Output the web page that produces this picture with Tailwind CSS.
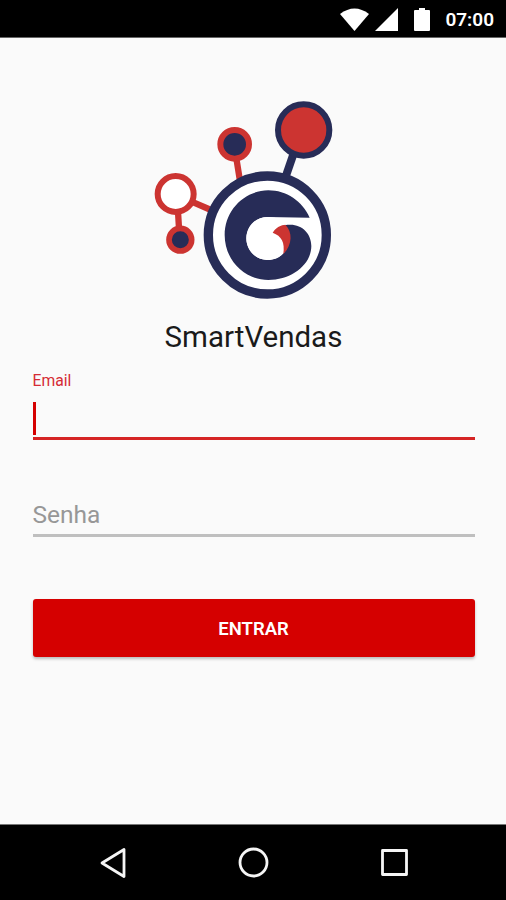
<!DOCTYPE html>
<html lang="pt-BR">
<head>
<meta charset="utf-8">
<meta name="viewport" content="width=device-width, initial-scale=1">
<title>SmartVendas</title>
<script src="https://cdn.jsdelivr.net/npm/@tailwindcss/browser@4"></script>
</head>
<body class="bg-[#fafafa] font-[Roboto,sans-serif]">
<div class="flex h-[900px] w-[506px] flex-col overflow-hidden">
  <header class="flex h-[38px] shrink-0 items-center justify-end border-b border-[#666] bg-black pt-[2px] pr-3 text-white">
    <svg class="mr-1.5 h-6 w-[29px]" viewBox="0 0 29 24" fill="currentColor"><path d="M0 6Q14.500-5 29 6L14.500 23Z"/></svg>
    <svg class="mr-4 h-6 w-[23px]" viewBox="0 0 23 24" fill="currentColor"><path d="M23 0V23H0Z"/></svg>
    <svg class="mr-[15px] h-6 w-4" viewBox="0 0 16 24" fill="currentColor"><path d="M5 0h6v2h4q1 0 1 1v19q0 1-1 1H1q-1 0-1-1V3q0-1 1-1h4Z"/></svg>
    <span class="text-[19px] leading-6 font-semibold">07:00</span>
  </header>
  <main class="flex flex-1 flex-col pt-[57px] pr-[31.500px] pl-[32.500px]">
    <svg class="ml-[112.500px] h-[210px] w-[200px] shrink-0" viewBox="0 0 600 630">
      <g fill="none" stroke="#cc3431" stroke-width="19">
        <path d="M274 190L284 252M140 320L198 345M99 350L102 400"/>
      </g>
      <path d="M446 175L422 245" stroke="#272c57" stroke-width="24"/>
      <circle cx="476" cy="105" r="77" fill="#cc3431" stroke="#272c57" stroke-width="18"/>
      <circle cx="269" cy="148" r="43" fill="#272c57" stroke="#cc3431" stroke-width="18"/>
      <circle cx="92" cy="297" r="54" fill="#fff" stroke="#cc3431" stroke-width="18"/>
      <circle cx="106" cy="434" r="34" fill="#272c57" stroke="#cc3431" stroke-width="17"/>
      <circle cx="367" cy="420" r="177" fill="#fff" stroke="#272c57" stroke-width="28"/>
      <path d="M494 368C473 319 424 286 370 286C298 286 239 346 239 420C239 495 298 555 370 555C440 555 499 509 499 453C499 417 473 389 436 389C412 389 396 396 385 413C417 418 430 434 430 448C423 475 399 495 368 495C332 495 304 466 304 430C304 394 332 366 368 366Z" fill="#272c57"/>
      <path d="M368 366L390 368V413Q417 422 418 472A64.500 64.500 0 1 1 368 366Z" fill="#fff"/>
      <path d="M383 413Q397 391 421 389C443 410 443 449 415 477C420 442 410 423 383 413Z" fill="#cc3431"/>
    </svg>
    <h1 class="mt-[14px] h-9 text-center text-[29.500px] leading-9 font-normal text-[#1a1a1a]">SmartVendas</h1>
    <label class="mt-4 h-5 text-[15.700px] leading-5 text-[#d52b35]">Email</label>
    <div class="mt-[11px] h-[38px] border-b-[3px] border-[#d52424]"><div class="h-[33px] w-[3px] bg-[#d50000]"></div></div>
    <div class="mt-[57px] h-[40px] border-b-[3px] border-[#bfbfbf] text-[24.500px] leading-9 text-[#979797]">Senha</div>
    <button class="mt-[62px] h-[58px] rounded-[3px] bg-[#d50000] pt-[3px] text-[18.500px] font-semibold text-white shadow-[0_2px_3px_rgba(0,0,0,0.25)]">ENTRAR</button>
  </main>
  <nav class="flex h-[76px] shrink-0 items-center justify-between border-t border-[#777] bg-black px-[97px]">
    <svg class="h-8 w-8" viewBox="0 0 32 32" fill="none" stroke="#f5f5f5" stroke-width="2.800" stroke-linejoin="round"><path d="M27 2.500V29.500L5 16Z"/></svg>
    <svg class="h-8 w-8" viewBox="0 0 32 32" fill="none" stroke="#f5f5f5" stroke-width="2.800"><circle cx="16.500" cy="15.500" r="13.500"/></svg>
    <svg class="h-8 w-8" viewBox="0 0 32 32" fill="none" stroke="#f5f5f5" stroke-width="2.800" stroke-linejoin="round"><path d="M5.500 3.500H29.500V27.500H5.500Z"/></svg>
  </nav>
</div>
</body>
</html>
